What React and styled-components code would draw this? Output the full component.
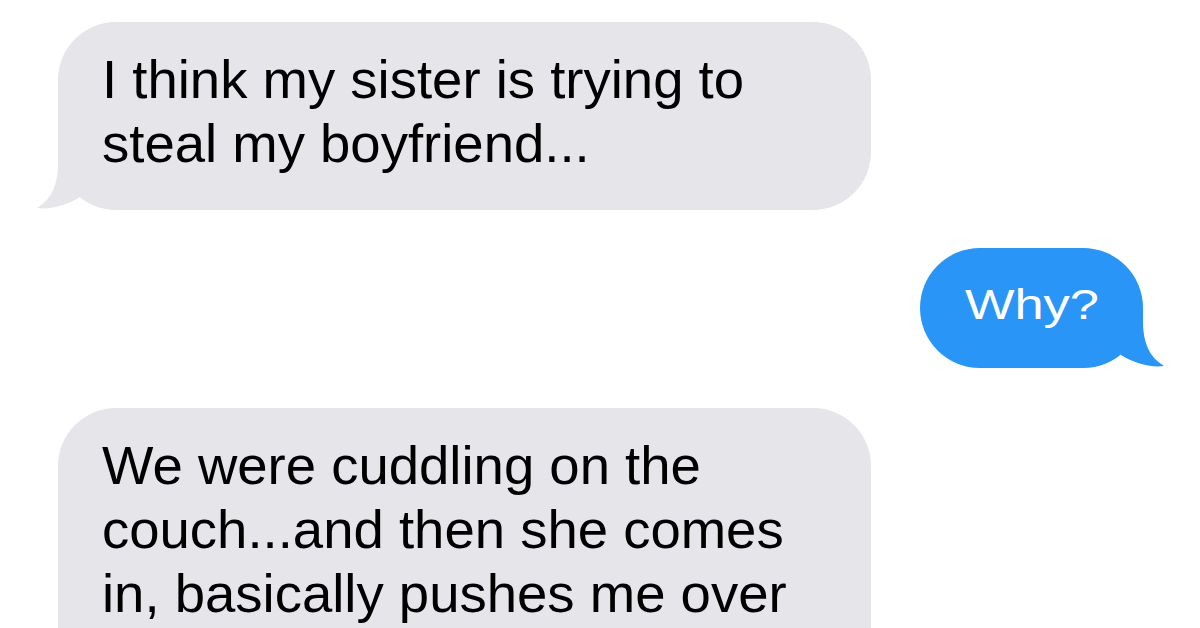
import React from 'react';
import styled, { createGlobalStyle } from 'styled-components';

const GlobalStyle = createGlobalStyle`
  html, body {
    margin: 0;
    padding: 0;
    background: #ffffff;
  }
  body {
    font-family: "Liberation Sans", Arial, sans-serif;
  }
`;

const Thread = styled.div`
  width: 1200px;
  height: 628px;
  overflow: hidden;
  display: flex;
  flex-direction: column;
  gap: 38px;
  padding-top: 22px;
  box-sizing: border-box;
  background: #ffffff;
`;

const Row = styled.div`
  display: flex;
  justify-content: ${props => (props.mine ? 'flex-end' : 'flex-start')};
  padding: ${props => (props.mine ? '0 57px 0 0' : '0 0 0 58px')};
  margin-top: ${props => props.extra || 0}px;
`;

const GrayBubble = styled.div`
  position: relative;
  width: 813px;
  box-sizing: border-box;
  padding: 26px 44px ${props => props.bottom || 34}px;
  background: #e5e5ea;
  border-radius: 58px;
  color: #000;
  font-size: 54.5px;
  line-height: 64px;
`;

const BlueBubble = styled.div`
  position: relative;
  width: 223px;
  box-sizing: border-box;
  padding: 31px 0 39px;
  background: #2995f6;
  border-radius: 60px;
  color: #fff;
  font-size: 43px;
  line-height: 50px;
  text-align: center;
`;

const WideText = styled.span`
  display: inline-block;
  transform: scaleX(1.22);
`;

const TailSvg = styled.svg`
  position: absolute;
  bottom: -2px;
  ${props => (props.right ? 'right: -24px;' : 'left: -24px;')}
  transform: ${props => (props.right ? 'scaleX(-1)' : 'none')};
`;

function Tail({ right, color }) {
  return (
    <TailSvg right={right} width="60" height="60" viewBox="0 0 60 60">
      <path
        d="M24 0 L24 12 C24 32 18 47 3 56 C17 58 33 53 46 45 L46 0 Z"
        fill={color}
      />
    </TailSvg>
  );
}

export default function App() {
  return (
    <>
      <GlobalStyle />
      <Thread>
        <Row>
          <GrayBubble>
            I think my sister is trying to
            <br />
            steal my boyfriend...
            <Tail color="#e5e5ea" />
          </GrayBubble>
        </Row>
        <Row mine>
          <BlueBubble>
            <WideText>Why?</WideText>
            <Tail right color="#2995f6" />
          </BlueBubble>
        </Row>
        <Row extra={2}>
          <GrayBubble bottom={60}>
            We were cuddling on the
            <br />
            couch...and then she comes
            <br />
            in, basically pushes me over
          </GrayBubble>
        </Row>
      </Thread>
    </>
  );
}
